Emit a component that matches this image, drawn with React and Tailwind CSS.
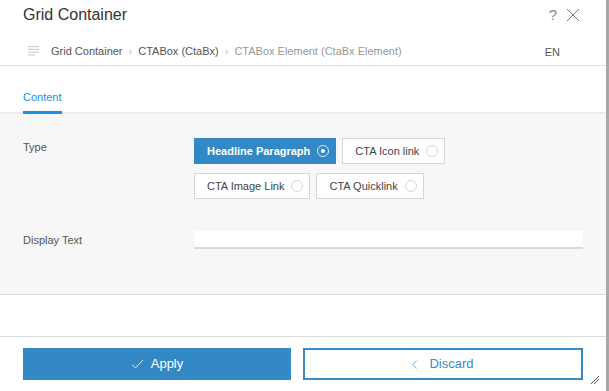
import { useState } from 'react';

const TYPES = ['Headline Paragraph', 'CTA Icon link', 'CTA Image Link', 'CTA Quicklink'];

const RadioPill = ({ label, selected, onClick }) => (
  <button
    type="button"
    onClick={onClick}
    className={`flex items-center gap-[7px] h-[26px] pl-[12px] pr-[6px] border text-[11px] leading-[13px] ${
      selected ? 'bg-[#3389c5] border-[#3389c5] text-white font-bold' : 'bg-white border-[#d6d6d6] text-[#444]'
    }`}
  >
    <span>{label}</span>
    {selected ? (
      <span className="flex items-center justify-center w-[12px] h-[12px] rounded-full border border-white/80">
        <span className="w-[4px] h-[4px] rounded-full bg-white" />
      </span>
    ) : (
      <span className="w-[12px] h-[12px] rounded-full border border-[#d6d6d6] bg-white" />
    )}
  </button>
);

const App = () => {
  const [type, setType] = useState(TYPES[0]);
  const [text, setText] = useState('');

  return (
    <div className="w-[609px] h-[391px] flex bg-white font-['Liberation_Sans',Arial,sans-serif] overflow-hidden">
      <div className="relative flex-1 flex flex-col border-r-[3px] border-[#a8a8a8]">
        {/* Header */}
        <div className="h-[66px] border-b border-[#dcdcdc] pl-[23px] flex flex-col">
          <div className="flex items-center justify-between h-[20px] mt-[5px] pr-[26px]">
            <h1 className="text-[16px] leading-[20px] text-[#333]">Grid Container</h1>
            <div className="flex items-center gap-[9px] text-[#888]">
              <span className="text-[15px] leading-[16px] font-light">?</span>
              <svg width="14" height="14" viewBox="0 0 14 14" stroke="#777" strokeWidth="1" fill="none">
                <path d="M1 1 L13 13 M13 1 L1 13" />
              </svg>
            </div>
          </div>
          <div className="flex items-center justify-between mt-[18px] pr-[46px]">
            <div className="flex items-center text-[11px] leading-[13px]">
              <svg width="12" height="10" viewBox="0 0 12 10" className="ml-[5px] mr-[11px]">
                <rect x="0" y="0" width="11" height="1.2" fill="#cfcfcf" />
                <rect x="0" y="2.8" width="11" height="1.2" fill="#cfcfcf" />
                <rect x="0" y="5.6" width="11" height="1.2" fill="#cfcfcf" />
                <rect x="0" y="8.4" width="7" height="1.2" fill="#cfcfcf" />
              </svg>
              <span className="text-[#555]">Grid Container</span>
              <span className="mx-[6px] text-[#bbb]">›</span>
              <span className="text-[#555]">CTABox (CtaBx)</span>
              <span className="mx-[6px] text-[#bbb]">›</span>
              <span className="text-[#999]">CTABox Element (CtaBx Element)</span>
            </div>
            <span className="text-[11px] leading-[13px] text-[#555] mt-[3px]">EN</span>
          </div>
        </div>

        {/* Tabs */}
        <div className="h-[48px] border-b-2 border-[#ebebeb] pl-[23px] flex items-end">
          <div className="text-[11px] leading-[13px] text-[#1b8fe3] border-b-[3px] border-[#1b8fe3] pb-[7px] -mb-[2px]">
            Content
          </div>
        </div>

        {/* Form */}
        <div className="h-[181px] bg-[#f7f7f7] border-b border-[#d9d9d9] pt-[24px] pr-[23px]">
          <div className="flex">
            <label className="w-[194px] pl-[23px] pt-[3px] text-[11px] leading-[13px] text-[#555]">Type</label>
            <div className="w-[256px] flex flex-wrap gap-x-[6px] gap-y-[9px]">
              {TYPES.map((t) => (
                <RadioPill key={t} label={t} selected={type === t} onClick={() => setType(t)} />
              ))}
            </div>
          </div>
          <div className="flex items-center mt-[32px]">
            <label className="w-[194px] pl-[23px] text-[11px] leading-[13px] text-[#555]">Display Text</label>
            <input
              value={text}
              onChange={(e) => setText(e.target.value)}
              className="flex-1 h-[18px] bg-white border-b-2 border-[#dadada] outline-none text-[11px] px-2"
            />
          </div>
        </div>

        <div className="h-[42px] border-b border-[#d9d9d9]" />

        {/* Footer */}
        <div className="flex gap-[12px] px-[23px] pt-[11px]">
          <button className="w-[268px] h-[32px] bg-[#3389c5] text-white text-[13px] flex items-center justify-center gap-[7px]">
            <svg width="13" height="10" viewBox="0 0 13 10" fill="none" stroke="#d8e8f5" strokeWidth="1">
              <path d="M1 5.5 L4.5 9 L12 1" />
            </svg>
            Apply
          </button>
          <button className="flex-1 h-[32px] bg-white border-2 border-[#3a8ac6] text-[#3a8ac6] text-[13px] flex items-center justify-center gap-[12px]">
            <svg width="5" height="9" viewBox="0 0 5 9" fill="none" stroke="#7fb2dc" strokeWidth="1">
              <path d="M4.5 0.5 L0.8 4.5 L4.5 8.5" />
            </svg>
            Discard
          </button>
        </div>

        {/* resize grip */}
        <svg width="8" height="8" viewBox="0 0 8 8" className="absolute right-[7px] bottom-[7px]" stroke="#555" strokeWidth="1">
          <path d="M0 8 L8 0 M3 8 L8 3" />
        </svg>
      </div>
    </div>
  );
};

export default App;
